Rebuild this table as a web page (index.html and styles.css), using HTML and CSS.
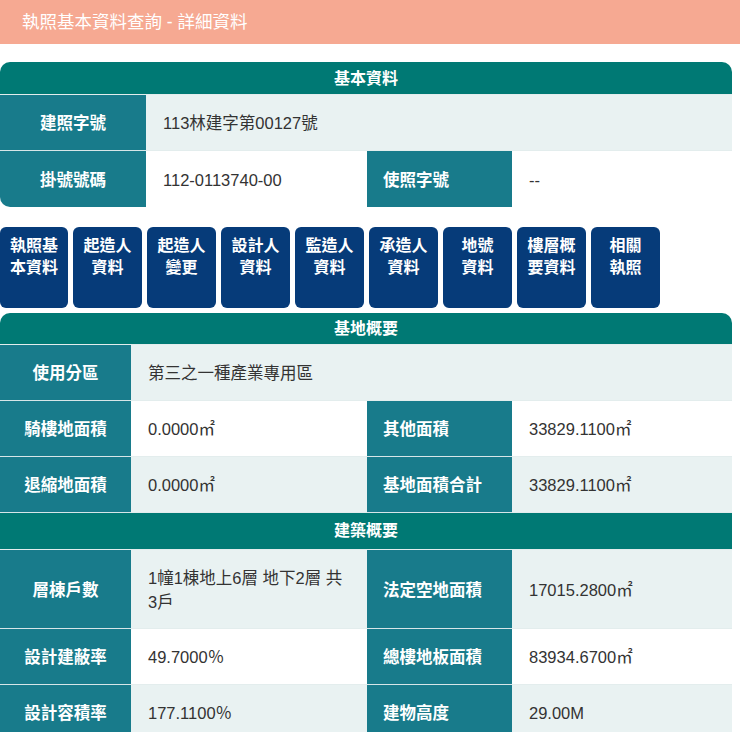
FILE: index.html
```html
<!DOCTYPE html>
<html lang="zh-Hant">
<head>
<meta charset="utf-8">
<title>執照基本資料查詢 - 詳細資料</title>
<link rel="stylesheet" href="styles.css">
</head>
<body>
<header class="topbar">執照基本資料查詢 - 詳細資料</header>
<main class="page">
  <section class="card card-basic">
    <div class="sec-head">基本資料</div>
    <div class="grid grid-basic">
      <div class="lbl">建照字號</div>
      <div class="val alt span3">113林建字第00127號</div>
      <div class="lbl">掛號號碼</div>
      <div class="val">112-0113740-00</div>
      <div class="lbl lbl-r">使照字號</div>
      <div class="val">--</div>
    </div>
  </section>

  <nav class="tabs">
    <a class="tab">執照基<br>本資料</a>
    <a class="tab">起造人<br>資料</a>
    <a class="tab">起造人<br>變更</a>
    <a class="tab">設計人<br>資料</a>
    <a class="tab">監造人<br>資料</a>
    <a class="tab">承造人<br>資料</a>
    <a class="tab">地號<br>資料</a>
    <a class="tab">樓層概<br>要資料</a>
    <a class="tab">相關<br>執照</a>
  </nav>

  <section class="card card-site">
    <div class="sec-head">基地概要</div>
    <div class="grid grid-site">
      <div class="lbl">使用分區</div>
      <div class="val alt span3">第三之一種產業專用區</div>
      <div class="lbl">騎樓地面積</div>
      <div class="val">0.0000㎡</div>
      <div class="lbl lbl-r">其他面積</div>
      <div class="val">33829.1100㎡</div>
      <div class="lbl">退縮地面積</div>
      <div class="val alt">0.0000㎡</div>
      <div class="lbl lbl-r">基地面積合計</div>
      <div class="val alt">33829.1100㎡</div>
    </div>
    <div class="sec-head sec-head-flat">建築概要</div>
    <div class="grid grid-site">
      <div class="lbl tall">層棟戶數</div>
      <div class="val alt tall"><span>1幢1棟地上6層 地下2層 共<span class="nw">3戶</span></span></div>
      <div class="lbl lbl-r tall">法定空地面積</div>
      <div class="val alt tall">17015.2800㎡</div>
      <div class="lbl">設計建蔽率</div>
      <div class="val">49.7000％</div>
      <div class="lbl lbl-r">總樓地板面積</div>
      <div class="val">83934.6700㎡</div>
      <div class="lbl">設計容積率</div>
      <div class="val alt">177.1100％</div>
      <div class="lbl lbl-r">建物高度</div>
      <div class="val alt">29.00M</div>
    </div>
  </section>
</main>
</body>
</html>
```

FILE: styles.css
```css
* { box-sizing: border-box; }
html, body { margin: 0; padding: 0; background: #fff; }
body {
  font-family: "Liberation Sans", "Noto Sans CJK TC", sans-serif;
  color: #333;
  overflow: hidden;
}
.topbar {
  height: 44px;
  background: #f6a992;
  color: #fff;
  font-size: 17.5px;
  line-height: 44px;
  padding-left: 22px;
}
.page {
  width: 732px;
  padding-top: 18px;
}
.card {
  border-radius: 10px 10px 0 0;
  overflow: hidden;
}
.card-basic { border-radius: 10px; }
.sec-head {
  background: #007974;
  color: #fff;
  font-weight: bold;
  font-size: 16px;
  text-align: center;
  height: 33px;
  line-height: 33px;
  border-bottom: 1px solid #e3eded;
}
.card-site > .sec-head:first-child { height: 32px; line-height: 32px; }
.sec-head-flat { height: 37px; line-height: 36px; }
.grid { display: grid; }
.grid-basic { grid-template-columns: 146px 221px 145px 1fr; }
.grid-site { grid-template-columns: 131px 236px 145px 1fr; }
.span3 { grid-column: span 3; }
.lbl, .val {
  min-height: 56px;
  display: flex;
  align-items: center;
  font-size: 16.5px;
  line-height: 24px;
  padding-top: 1px;
  border-bottom: 1px solid #e3eded;
}
.lbl {
  background: #187b8b;
  color: #fff;
  font-weight: bold;
  font-size: 16.5px;
  justify-content: center;
  text-align: center;
  padding-left: 4px;
  padding-right: 4px;
  border-bottom-color: #d6e6e8;
}
.lbl-r { justify-content: flex-start; padding-left: 16px; }
.val { background: #fff; padding-left: 17px; padding-right: 17px; }
.val.alt { background: #e9f2f2; }
.nw { white-space: nowrap; }
.tall { min-height: 79px; }
.grid-basic > div:nth-last-child(-n+4) { border-bottom: none; }
.tabs {
  display: flex;
  gap: 5px;
  margin: 20px 0 5px;
}
.tab {
  width: 69px;
  height: 81px;
  background: #063b79;
  color: #fff;
  border-radius: 6px;
  font-weight: bold;
  font-size: 16px;
  line-height: 22px;
  text-align: center;
  padding-top: 8px;
}
.tab:first-child { width: 68px; }
```
